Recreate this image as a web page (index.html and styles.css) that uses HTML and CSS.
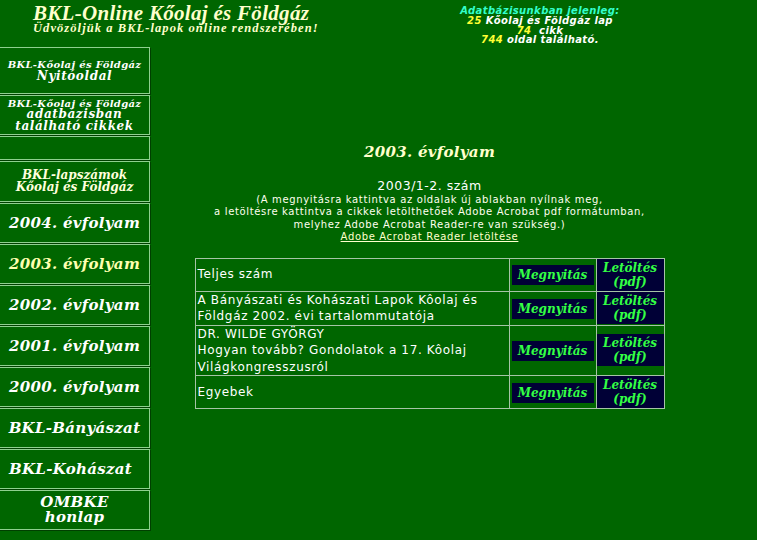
FILE: index.html
```html
<!DOCTYPE html>
<html lang="hu">
<head>
<meta charset="utf-8">
<title>BKL-Online Kőolaj és Földgáz</title>
<link rel="stylesheet" href="styles.css">
</head>
<body>
<div class="page">
  <header class="top">
    <div class="brand">
      <div class="title">BKL-Online Kőolaj és Földgáz</div>
      <div class="subtitle">Üdvözöljük a BKL-lapok online rendszerében!</div>
    </div>
    <div class="stats">
      <div class="stats-head">Adatbázisunkban jelenleg:</div>
      <div><span class="num">25</span> Kőolaj és Földgáz lap</div>
      <div><span class="num">74</span>&nbsp; cikk</div>
      <div><span class="num">744</span> oldal található.</div>
    </div>
  </header>
  <div class="main-row">
    <nav class="menu">
      <a class="item item-first" href="#"><span class="sm">BKL-Kőolaj és Földgáz</span><span class="md">Nyitóoldal</span></a>
      <a class="item item-tall" href="#"><span class="sm">BKL-Kőolaj és Földgáz</span><span class="md">adatbázisban</span><span class="md">található cikkek</span></a>
      <div class="item item-spacer"></div>
      <a class="item item-issue" href="#"><span class="md2">BKL-lapszámok</span><span class="md2">Kőolaj és Földgáz</span></a>
      <a class="item" href="#"><span class="lg">2004. évfolyam</span></a>
      <a class="item active" href="#"><span class="lg">2003. évfolyam</span></a>
      <a class="item" href="#"><span class="lg">2002. évfolyam</span></a>
      <a class="item" href="#"><span class="lg">2001. évfolyam</span></a>
      <a class="item" href="#"><span class="lg">2000. évfolyam</span></a>
      <a class="item" href="#"><span class="lg">BKL-Bányászat</span></a>
      <a class="item item-left" href="#"><span class="lg">BKL-Kohászat</span></a>
      <a class="item" href="#"><span class="lg lg-tight">OMBKE</span><span class="lg lg-tight">honlap</span></a>
    </nav>
    <main class="content">
      <h1 class="year">2003. évfolyam</h1>
      <div class="issue">2003/1-2. szám</div>
      <div class="note">(A megnyitásra kattintva az oldalak új ablakban nyílnak meg,<br>a letöltésre kattintva a cikkek letölthetőek Adobe Acrobat pdf formátumban,<br>melyhez Adobe Acrobat Reader-re van szükség.)<br><a class="note-link" href="#">Adobe Acrobat Reader letöltése</a></div>
      <table class="articles">
        <colgroup><col class="c1"><col class="c2"><col class="c3"></colgroup>
        <tr>
          <td class="t">Teljes szám</td>
          <td class="b"><a class="open" href="#">Megnyitás</a></td>
          <td class="d"><a class="dl" href="#">Letöltés<br>(pdf)</a></td>
        </tr>
        <tr>
          <td class="t">A Bányászati és Kohászati Lapok Kôolaj és Földgáz 2002. évi tartalommutatója</td>
          <td class="b"><a class="open" href="#">Megnyitás</a></td>
          <td class="d"><a class="dl" href="#">Letöltés<br>(pdf)</a></td>
        </tr>
        <tr>
          <td class="t">DR. WILDE GYÖRGY<br>Hogyan tovább? Gondolatok a 17. Kôolaj Világkongresszusról</td>
          <td class="b"><a class="open" href="#">Megnyitás</a></td>
          <td class="d"><a class="dl" href="#">Letöltés<br>(pdf)</a></td>
        </tr>
        <tr>
          <td class="t">Egyebek</td>
          <td class="b"><a class="open" href="#">Megnyitás</a></td>
          <td class="d"><a class="dl" href="#">Letöltés<br>(pdf)</a></td>
        </tr>
      </table>
    </main>
  </div>
</div>
</body>
</html>
```

FILE: styles.css
```css
html, body {
  margin: 0;
  padding: 0;
  background: #006600;
}
body {
  width: 757px;
  height: 540px;
  overflow: hidden;
  font-family: "DejaVu Sans", Verdana, sans-serif;
  color: #ffffff;
}
a { text-decoration: none; }

.top {
  display: flex;
  height: 46px;
}
.brand {
  width: 407px;
  padding-left: 33px;
  padding-top: 3px;
  color: #ffffcc;
  font-family: "Liberation Serif", "Times New Roman", serif;
  font-weight: bold;
  font-style: italic;
}
.title {
  font-size: 21px;
  line-height: 20px;
  letter-spacing: 0.3px;
}
.subtitle {
  font-size: 12.5px;
  line-height: 11px;
  letter-spacing: 1.07px;
}
.stats {
  width: 200px;
  padding-top: 6px;
  text-align: center;
  font-size: 10px;
  line-height: 9.8px;
  letter-spacing: 0.4px;
  font-weight: bold;
  font-style: italic;
  color: #ffffff;
}
.stats-head { color: #33ffcc; }
.num { color: #ffff33; }

.main-row {
  display: flex;
  align-items: flex-start;
}
.menu {
  width: 150px;
  display: flex;
  flex-direction: column;
  gap: 1px;
  padding-top: 1px;
}
.item {
  box-sizing: border-box;
  height: 40px;
  margin-left: -1px;
  width: 151px;
  border: 1px solid #8fd08f;
  box-shadow: 1px 1px 0 #003f00;
  display: flex;
  flex-direction: column;
  align-items: center;
  justify-content: center;
  color: #ffffff;
  font-family: "DejaVu Serif", Georgia, serif;
  font-weight: bold;
  font-style: italic;
  text-align: center;
}
.item-first { height: 47px; }
.item-spacer { height: 24px; }
.item-issue { height: 41px; color: #ffffdd; }
.active { color: #ffffb0; }
.item-left { align-items: flex-start; padding-left: 9px; }
.sm { font-size: 10px; line-height: 11.5px; letter-spacing: 0.35px; }
.md { font-size: 12px; line-height: 11.5px; letter-spacing: 0.6px; }
.md2 { font-size: 12px; line-height: 11.5px; }
.lg { font-size: 15px; line-height: 17px; letter-spacing: 0.3px; }
.lg-tight { line-height: 15px; }

.content {
  flex: 0 0 559px;
  text-align: center;
}
.year {
  margin: 97px 0 0 0;
  font-family: "DejaVu Serif", Georgia, serif;
  font-weight: bold;
  font-style: italic;
  font-size: 15px;
  line-height: 18px;
  letter-spacing: 0.3px;
  color: #ffffcc;
}
.issue {
  margin-top: 17px;
  font-size: 12.5px;
  line-height: 16px;
  letter-spacing: 0.5px;
}
.note {
  font-size: 10px;
  line-height: 12.4px;
  letter-spacing: 0.65px;
  color: #ffffee;
}
.note-link {
  color: #ffffcc;
  text-decoration: underline;
}

.articles {
  margin: 14px auto 0 auto;
  width: 470px;
  table-layout: fixed;
  border-collapse: collapse;
  text-align: left;
}
.c1 { width: 314px; }
.c2 { width: 87px; }
.c3 { width: 68px; }
.articles td {
  border: 1px solid #a6c4a6;
  padding: 0;
  vertical-align: middle;
}
.t {
  font-size: 12px;
  line-height: 16.5px;
  letter-spacing: 0.65px;
  padding: 0 2px !important;
  color: #ffffff;
}
.b { text-align: center; }
.open, .dl {
  font-family: "DejaVu Serif", Georgia, serif;
  font-weight: bold;
  font-style: italic;
  font-size: 12px;
  color: #33ff44;
  background: #000036;
}
.open {
  display: inline-block;
  width: 82px;
  height: 20px;
  line-height: 20px;
  text-align: center;
}
.dl {
  display: block;
  height: 32px;
  box-sizing: border-box;
  padding-top: 2px;
  line-height: 14px;
  text-align: center;
}
```
